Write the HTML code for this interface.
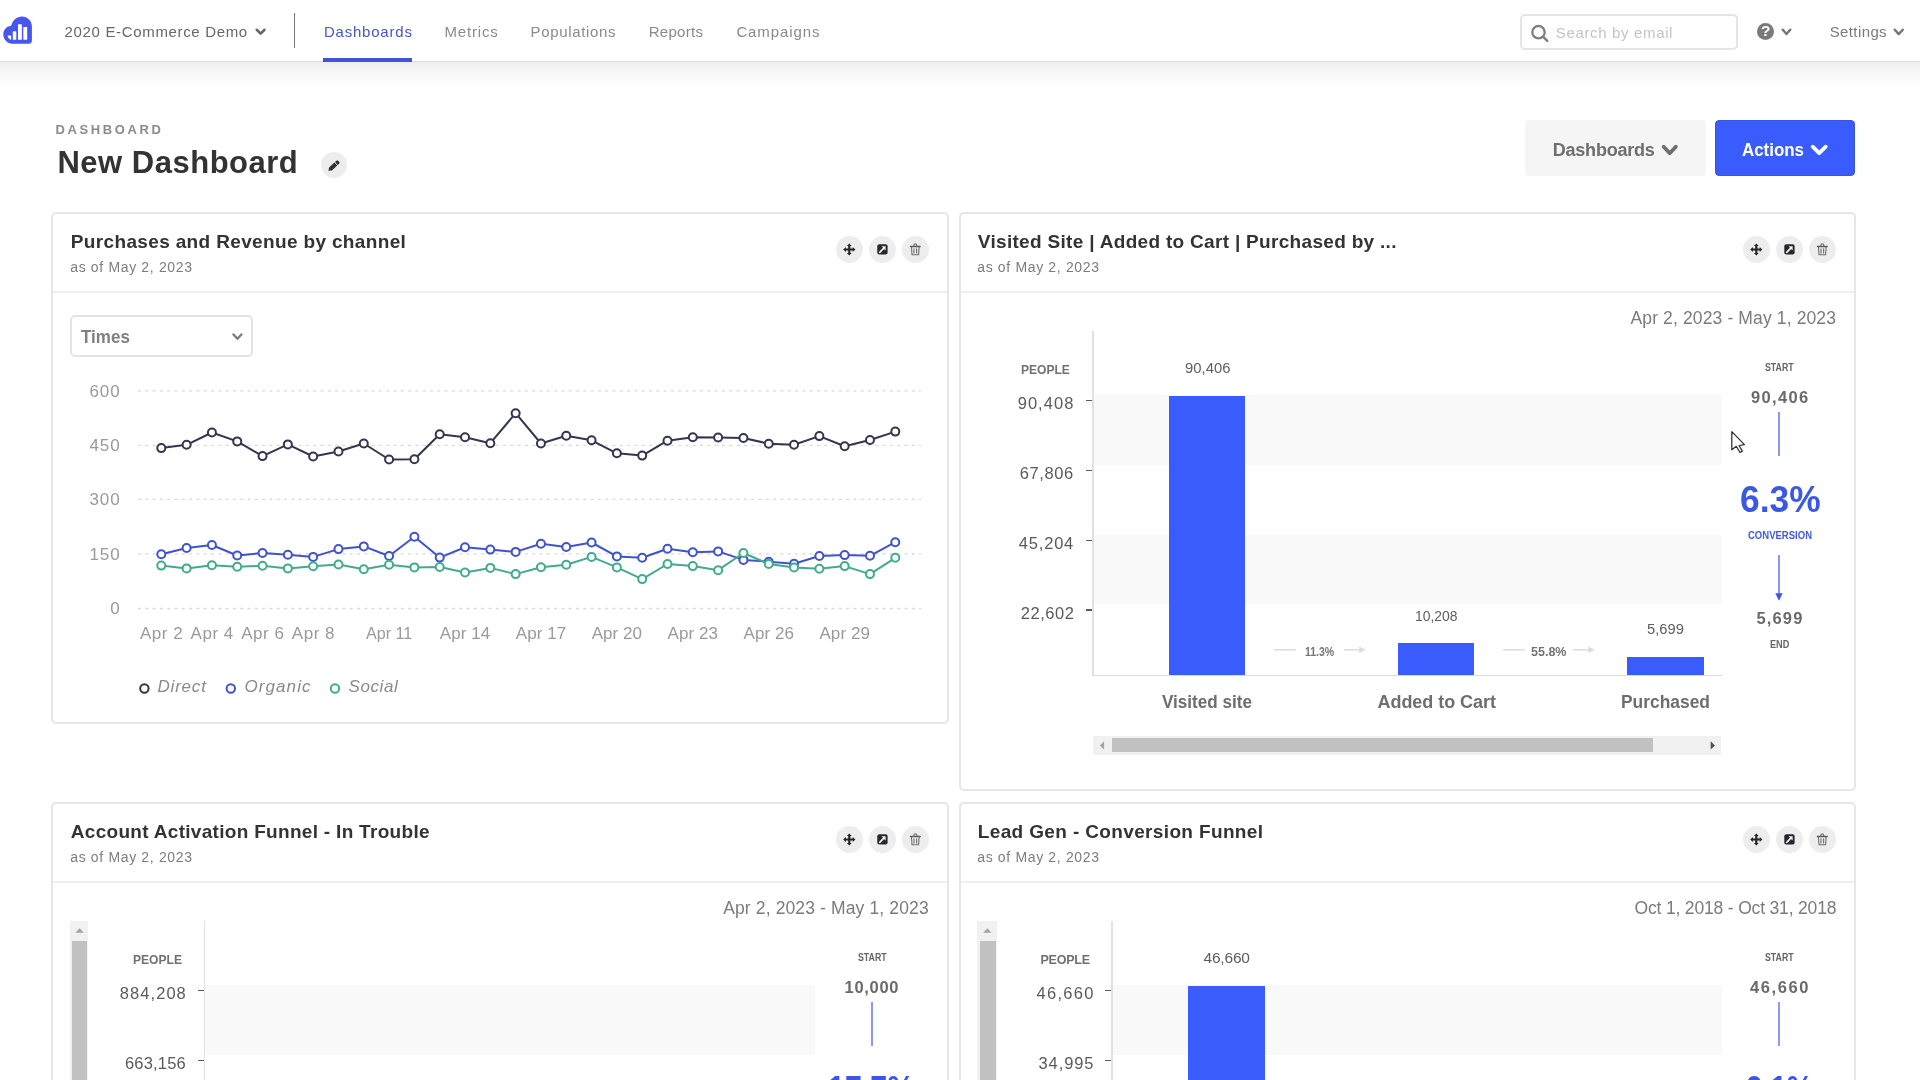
<!DOCTYPE html>
<html lang="en">
<head>
<meta charset="utf-8">
<title>New Dashboard</title>
<style>
*{box-sizing:border-box;margin:0;padding:0}
html,body{width:1920px;height:1080px;overflow:hidden;background:#fff}
body{font-family:"Liberation Sans",sans-serif;color:#666;-webkit-font-smoothing:antialiased}
#app{position:relative;width:1920px;height:1080px;overflow:hidden;background:#fff;will-change:transform}
.t{position:absolute;white-space:nowrap;line-height:1;display:block}
.abs{position:absolute}
nav{position:absolute;left:0;top:0;width:1920px;height:62px;background:#fff;border-bottom:1px solid #dedede;z-index:3}
.navshadow{position:absolute;left:0;top:62px;width:1920px;height:28px;background:linear-gradient(#ededed,#f6f6f6 30%,#fcfcfc 65%,#fff);z-index:1}
.card{position:absolute;background:#fff;border:2px solid #e6e6e6;border-radius:5px;z-index:2}
.card .sep{position:absolute;left:0;right:0;height:2px;background:#efefef}
.ib{position:absolute;width:27px;height:27px;border-radius:50%;background:#ededee}
.ib svg{position:absolute;left:0;top:0}
.btn{position:absolute;border-radius:4px}
</style>
</head>
<body>
<div id="app">
<nav>
<svg class="abs" style="left:0;top:10px" width="40" height="40" viewBox="0 10 40 40">
<path d="M21.9 16.5c5.6 0 10 4.4 10 9.9V40.6a3.1 3.1 0 0 1-3.1 3.1H12.2C7.2 43.7 3.3 39.3 3.3 34.3c0-4.3 3.1-7.9 7.3-8.3 .4-.1 .8-.4 .9-.9 1.1-4.9 5.3-8.6 10.4-8.6z" fill="#4656ee"/>
<path d="M7.6 35.6h3.5v4.1H10.9c-1.5 0-3.3-2.3-3.3-4.1z" fill="#fff"/>
<rect x="12.8" y="31.3" width="3.5" height="8.5" rx=".6" fill="#fff"/>
<rect x="18" y="24.3" width="3.9" height="15.5" rx=".6" fill="#fff"/>
<rect x="23.3" y="27" width="3.9" height="12.8" rx=".6" fill="#fff"/>
</svg>
<span class="t" style="left:64.6px;top:24.1px;font-size:15px;color:#666;letter-spacing:0.66px;">2020 E-Commerce Demo</span>
<svg class="abs" style="left:252.9px;top:26.1px" width="15.3" height="11.4" viewBox="252.9 26.1 15.3 11.4"><path d="M256.65 29.85 L260.55 33.75 L264.45 29.85" fill="none" stroke="#666" stroke-width="2.5" stroke-linecap="round" stroke-linejoin="round"/></svg>
<div class="abs" style="left:294px;top:13px;width:1px;height:35px;background:#777"></div>
<a class="t" style="left:323.9px;top:24.4px;font-size:15px;color:#4657c8;letter-spacing:0.79px;">Dashboards</a>
<div class="abs" style="left:322.5px;top:58px;width:89.5px;height:4px;background:#4153d6"></div>
<a class="t" style="left:444.5px;top:24.4px;font-size:15px;color:#8a8a8a;letter-spacing:0.81px;">Metrics</a>
<a class="t" style="left:530.6px;top:24.4px;font-size:15px;color:#8a8a8a;letter-spacing:0.65px;">Populations</a>
<a class="t" style="left:648.7px;top:24.4px;font-size:15px;color:#8a8a8a;letter-spacing:0.3px;">Reports</a>
<a class="t" style="left:736.4px;top:24.4px;font-size:15px;color:#8a8a8a;letter-spacing:0.89px;">Campaigns</a>
<div class="abs" style="left:1520.2px;top:14px;width:217.800px;height:35.800px;border:2px solid #e5e5e5;border-radius:5px;background:#fff"></div>
<svg class="abs" style="left:1530px;top:23px" width="20" height="20" viewBox="1530 23 20 20"><circle cx="1538.5" cy="32.2" r="6.200" fill="none" stroke="#808080" stroke-width="2.300"/><path d="M1543.2 36.9L1547.3 40.9" stroke="#808080" stroke-width="2.500" stroke-linecap="round"/></svg>
<span class="t" style="left:1555.8px;top:25px;font-size:15px;color:#c4c4c4;letter-spacing:0.65px;">Search by email</span>
<div class="abs" style="left:1756.5px;top:22.5px;width:17px;height:17px;border-radius:50%;background:#7a7a7a"></div>
<span class="t" style="left:1761.1px;top:23.48px;font-size:15.5px;font-weight:700;color:#fff;">?</span>
<svg class="abs" style="left:1778.5px;top:25.9px" width="15" height="11.8" viewBox="1778.5 25.9 15 11.8"><path d="M1782.25 29.65 L1786 33.95 L1789.75 29.65" fill="none" stroke="#777" stroke-width="2.5" stroke-linecap="round" stroke-linejoin="round"/></svg>
<span class="t" style="left:1829.7px;top:24.3px;font-size:15px;color:#7a7a7a;letter-spacing:0.39px;">Settings</span>
<svg class="abs" style="left:1891.3px;top:25.9px" width="15.5" height="11.8" viewBox="1891.3 25.9 15.5 11.8"><path d="M1895.05 29.65 L1899.05 33.95 L1903.05 29.65" fill="none" stroke="#777" stroke-width="2.5" stroke-linecap="round" stroke-linejoin="round"/></svg>
</nav>
<div class="navshadow"></div>
<header class="abs" style="left:0;top:100px;width:1920px;height:100px;z-index:2">
<span class="t" style="left:55.6px;top:23.4px;font-size:13px;font-weight:700;color:#8b8b8b;letter-spacing:2.6px;">DASHBOARD</span>
<h1 class="t" style="left:57.4px;top:46.76px;font-size:31px;font-weight:700;color:#333;letter-spacing:0.51px;">New Dashboard</h1>
<div class="ib" style="left:320.8px;top:51.7px;width:26.6px;height:26.6px"></div><svg class="abs" style="left:320px;top:50px" width="28" height="28" viewBox="320 150 28 28"><path d="M328.4 170.8L331.8 170.4L337.2 165.5L334.4 162.5L329.1 167.4z M337.7 165.0L339.4 163.5L339.5 162.3L337.8 160.5L336.7 160.4L335.0 162.0z" fill="#2e2e2e"/></svg>
<div class="btn" style="left:1525.4px;top:20px;width:180.6px;height:56.4px;background:#f5f5f5"></div>
<span class="t" style="left:1552.75px;top:41.16px;font-size:18px;font-weight:700;color:#6e6e6e;letter-spacing:-0.22px;">Dashboards</span>
<svg class="abs" style="left:1658.45px;top:41.2px" width="23.55" height="17.9" viewBox="1658.45 41.2 23.55 17.9"><path d="M1664.15 46.9 L1670.22 53.4 L1676.3 46.9" fill="none" stroke="#6e6e6e" stroke-width="3.8" stroke-linecap="round" stroke-linejoin="round"/></svg>
<div class="btn" style="left:1715.3px;top:19.7px;width:139.4px;height:56.8px;background:#3a5cfc;border:1px solid #3853d8"></div>
<span class="t" style="left:1742px;top:41.16px;font-size:18px;transform:scaleX(0.9393);transform-origin:0 0;font-weight:700;color:#fff;">Actions</span>
<svg class="abs" style="left:1806.6px;top:41.2px" width="24.45" height="17.9" viewBox="1806.6 41.2 24.45 17.9"><path d="M1812.3 46.9 L1818.83 53.4 L1825.35 46.9" fill="none" stroke="#fff" stroke-width="3.8" stroke-linecap="round" stroke-linejoin="round"/></svg>
</header>
<section class="card" style="left:51px;top:212px;width:897.700px;height:512px">
<h2 class="t" style="left:17.8px;top:17.52px;font-size:19px;font-weight:700;color:#333;letter-spacing:0.35px;">Purchases and Revenue by channel</h2>
<span class="t" style="left:17.2px;top:45.65px;font-size:14px;color:#7d7d7d;letter-spacing:0.66px;">as of May 2, 2023</span>
<div class="ib" style="left:782.6px;top:21.6px"><svg width="27" height="27" viewBox="0 0 27 27"><path d="M13.300 7.400l2.400 2.700h-1.300v2.300h2.300v-1.300l2.700 2.400-2.700 2.400v-1.300h-2.300v2.300h1.300l-2.400 2.700-2.400-2.700h1.300v-2.300H9.900v1.300l-2.700-2.400 2.700-2.400v1.300h2.300v-2.300h-1.300z" fill="#262626"/></svg></div><div class="ib" style="left:816.1px;top:21.6px"><svg width="27" height="27" viewBox="0 0 27 27"><rect x="8.300" y="8.300" width="10.300" height="10.300" rx="2" fill="#26262e"/><path d="M10.700 16.300l3.900-3.900" stroke="#f4f4f4" stroke-width="1.700" stroke-linecap="round"/><path d="M12.500 10.300h4.100v4.100z" fill="#f4f4f4"/></svg></div><div class="ib" style="left:849.1px;top:21.6px"><svg width="27" height="27" viewBox="0 0 27 27"><path d="M8.400 10.500h9.800" stroke="#555" stroke-width="1.300" stroke-linecap="round" fill="none"/><path d="M11.600 10.300l.7-2.300h2l.7 2.300M9.500 11l.5 7.700h6.600l.5-7.700M12 12.800v4.200M14.600 12.800v4.200" fill="none" stroke="#6e6e6e" stroke-width="1.100" stroke-linecap="round" stroke-linejoin="round"/></svg></div>
<div class="sep" style="top:77px"></div>
<div class="abs" style="left:16.6px;top:101px;width:183.400px;height:42px;border:2px solid #e4e4e4;border-radius:5px"></div>
<span class="t" style="left:28.4px;top:114.79px;font-size:17.5px;transform:scaleX(0.9729);transform-origin:0 0;font-weight:700;color:#808080;">Times</span>
<svg class="abs" style="left:177.4px;top:116.7px" width="14.9" height="11.3" viewBox="177.4 116.7 14.9 11.3"><path d="M180.85 120.15 L184.85 124.55 L188.85 120.15" fill="none" stroke="#7c7c7c" stroke-width="2.3" stroke-linecap="round" stroke-linejoin="round"/></svg>
<svg class="abs" style="left:0;top:156px" width="895" height="350" viewBox="53 370 895 350"><line x1="138" x2="921" y1="390.8" y2="390.8" stroke="#d9d9d9" stroke-width="1.300" stroke-dasharray="3 4.300"/><line x1="138" x2="921" y1="445.3" y2="445.3" stroke="#d9d9d9" stroke-width="1.300" stroke-dasharray="3 4.300"/><line x1="138" x2="921" y1="499.4" y2="499.4" stroke="#d9d9d9" stroke-width="1.300" stroke-dasharray="3 4.300"/><line x1="138" x2="921" y1="553.9" y2="553.9" stroke="#d9d9d9" stroke-width="1.300" stroke-dasharray="3 4.300"/><line x1="138" x2="921" y1="608.5" y2="608.5" stroke="#d9d9d9" stroke-width="1.300" stroke-dasharray="3 4.300"/><g stroke="#34354f" stroke-width="2" fill="#fff"><polyline points="161.3,448.1 186.61,444.8 211.92,432.5 237.23,441.4 262.54,456.1 287.85,444.4 313.16,456.5 338.47,451.5 363.78,443.5 389.09,459.5 414.4,459.3 439.71,434.3 465.02,437.3 490.33,443.2 515.64,413.2 540.95,443.5 566.26,435.7 591.57,440.3 616.88,453.3 642.19,455.6 667.5,440.7 692.81,437.3 718.12,437.5 743.43,438 768.74,443.7 794.05,444.8 819.36,436.1 844.67,446.2 869.98,440 895.29,431.6" fill="none" stroke-linejoin="round"/><circle cx="161.3" cy="448.1" r="4"/><circle cx="186.61" cy="444.8" r="4"/><circle cx="211.92" cy="432.5" r="4"/><circle cx="237.23" cy="441.4" r="4"/><circle cx="262.54" cy="456.1" r="4"/><circle cx="287.85" cy="444.4" r="4"/><circle cx="313.16" cy="456.5" r="4"/><circle cx="338.47" cy="451.5" r="4"/><circle cx="363.78" cy="443.5" r="4"/><circle cx="389.09" cy="459.5" r="4"/><circle cx="414.4" cy="459.3" r="4"/><circle cx="439.71" cy="434.3" r="4"/><circle cx="465.02" cy="437.3" r="4"/><circle cx="490.33" cy="443.2" r="4"/><circle cx="515.64" cy="413.2" r="4"/><circle cx="540.95" cy="443.5" r="4"/><circle cx="566.26" cy="435.7" r="4"/><circle cx="591.57" cy="440.3" r="4"/><circle cx="616.88" cy="453.3" r="4"/><circle cx="642.19" cy="455.6" r="4"/><circle cx="667.5" cy="440.7" r="4"/><circle cx="692.81" cy="437.3" r="4"/><circle cx="718.12" cy="437.5" r="4"/><circle cx="743.43" cy="438" r="4"/><circle cx="768.74" cy="443.7" r="4"/><circle cx="794.05" cy="444.8" r="4"/><circle cx="819.36" cy="436.1" r="4"/><circle cx="844.67" cy="446.2" r="4"/><circle cx="869.98" cy="440" r="4"/><circle cx="895.29" cy="431.6" r="4"/></g><g stroke="#4052cc" stroke-width="2" fill="#fff"><polyline points="161.3,554.2 186.61,548 211.92,545 237.23,555.5 262.54,553 287.85,554.8 313.16,556.9 338.47,549.1 363.78,546.4 389.09,556 414.4,536.7 439.71,557.6 465.02,547.3 490.33,549.6 515.64,551.9 540.95,543.8 566.26,547 591.57,542.5 616.88,556.4 642.19,557.8 667.5,548.7 692.81,552.3 718.12,551.4 743.43,559.9 768.74,561.7 794.05,563.8 819.36,556 844.67,555.1 869.98,555.8 895.29,542.2" fill="none" stroke-linejoin="round"/><circle cx="161.3" cy="554.2" r="4"/><circle cx="186.61" cy="548" r="4"/><circle cx="211.92" cy="545" r="4"/><circle cx="237.23" cy="555.5" r="4"/><circle cx="262.54" cy="553" r="4"/><circle cx="287.85" cy="554.8" r="4"/><circle cx="313.16" cy="556.9" r="4"/><circle cx="338.47" cy="549.1" r="4"/><circle cx="363.78" cy="546.4" r="4"/><circle cx="389.09" cy="556" r="4"/><circle cx="414.4" cy="536.7" r="4"/><circle cx="439.71" cy="557.6" r="4"/><circle cx="465.02" cy="547.3" r="4"/><circle cx="490.33" cy="549.6" r="4"/><circle cx="515.64" cy="551.9" r="4"/><circle cx="540.95" cy="543.8" r="4"/><circle cx="566.26" cy="547" r="4"/><circle cx="591.57" cy="542.5" r="4"/><circle cx="616.88" cy="556.4" r="4"/><circle cx="642.19" cy="557.8" r="4"/><circle cx="667.5" cy="548.7" r="4"/><circle cx="692.81" cy="552.3" r="4"/><circle cx="718.12" cy="551.4" r="4"/><circle cx="743.43" cy="559.9" r="4"/><circle cx="768.74" cy="561.7" r="4"/><circle cx="794.05" cy="563.8" r="4"/><circle cx="819.36" cy="556" r="4"/><circle cx="844.67" cy="555.1" r="4"/><circle cx="869.98" cy="555.8" r="4"/><circle cx="895.29" cy="542.2" r="4"/></g><g stroke="#41ab8d" stroke-width="2" fill="#fff"><polyline points="161.3,565.6 186.61,568.4 211.92,565.2 237.23,566.8 262.54,565.8 287.85,568.4 313.16,566.3 338.47,564.5 363.78,569.3 389.09,564.7 414.4,567.4 439.71,567 465.02,572.5 490.33,567.9 515.64,574.1 540.95,567.2 566.26,564.7 591.57,556.9 616.88,567.4 642.19,579.1 667.5,564 692.81,566.1 718.12,570.2 743.43,553 768.74,564 794.05,567.4 819.36,568.8 844.67,566.1 869.98,574.1 895.29,557.8" fill="none" stroke-linejoin="round"/><circle cx="161.3" cy="565.6" r="4"/><circle cx="186.61" cy="568.4" r="4"/><circle cx="211.92" cy="565.2" r="4"/><circle cx="237.23" cy="566.8" r="4"/><circle cx="262.54" cy="565.8" r="4"/><circle cx="287.85" cy="568.4" r="4"/><circle cx="313.16" cy="566.3" r="4"/><circle cx="338.47" cy="564.5" r="4"/><circle cx="363.78" cy="569.3" r="4"/><circle cx="389.09" cy="564.7" r="4"/><circle cx="414.4" cy="567.4" r="4"/><circle cx="439.71" cy="567" r="4"/><circle cx="465.02" cy="572.5" r="4"/><circle cx="490.33" cy="567.9" r="4"/><circle cx="515.64" cy="574.1" r="4"/><circle cx="540.95" cy="567.2" r="4"/><circle cx="566.26" cy="564.7" r="4"/><circle cx="591.57" cy="556.9" r="4"/><circle cx="616.88" cy="567.4" r="4"/><circle cx="642.19" cy="579.1" r="4"/><circle cx="667.5" cy="564" r="4"/><circle cx="692.81" cy="566.1" r="4"/><circle cx="718.12" cy="570.2" r="4"/><circle cx="743.43" cy="553" r="4"/><circle cx="768.74" cy="564" r="4"/><circle cx="794.05" cy="567.4" r="4"/><circle cx="819.36" cy="568.8" r="4"/><circle cx="844.67" cy="566.1" r="4"/><circle cx="869.98" cy="574.1" r="4"/><circle cx="895.29" cy="557.8" r="4"/></g><circle cx="144.4" cy="688.5" r="4.200" fill="#fff" stroke="#34354f" stroke-width="2"/><circle cx="230.8" cy="688.5" r="4.200" fill="#fff" stroke="#4052cc" stroke-width="2"/><circle cx="335" cy="688.5" r="4.200" fill="#fff" stroke="#41ab8d" stroke-width="2"/></svg>
<span class="t" style="left:36.44px;top:168.81px;font-size:17px;color:#9a9a9a;letter-spacing:0.9px;">600</span>
<span class="t" style="left:36.44px;top:223.21px;font-size:17px;color:#9a9a9a;letter-spacing:0.9px;">450</span>
<span class="t" style="left:36.44px;top:277.41px;font-size:17px;color:#9a9a9a;letter-spacing:0.9px;">300</span>
<span class="t" style="left:36.44px;top:331.81px;font-size:17px;color:#9a9a9a;letter-spacing:0.9px;">150</span>
<span class="t" style="left:57.15px;top:386.41px;font-size:17px;color:#9a9a9a;">0</span>
<span class="t" style="left:86.95px;top:410.81px;font-size:17px;color:#9a9a9a;letter-spacing:0.52px;">Apr 2</span>
<span class="t" style="left:137.57px;top:410.81px;font-size:17px;color:#9a9a9a;letter-spacing:0.52px;">Apr 4</span>
<span class="t" style="left:188.19px;top:410.81px;font-size:17px;color:#9a9a9a;letter-spacing:0.52px;">Apr 6</span>
<span class="t" style="left:238.81px;top:410.81px;font-size:17px;color:#9a9a9a;letter-spacing:0.52px;">Apr 8</span>
<span class="t" style="left:312.94px;top:410.81px;font-size:17px;transform:scaleX(0.9483);transform-origin:0 0;color:#9a9a9a;">Apr 11</span>
<span class="t" style="left:386.82px;top:410.81px;font-size:17px;color:#9a9a9a;letter-spacing:0.06px;">Apr 14</span>
<span class="t" style="left:462.75px;top:410.81px;font-size:17px;color:#9a9a9a;letter-spacing:0.06px;">Apr 17</span>
<span class="t" style="left:538.68px;top:410.81px;font-size:17px;color:#9a9a9a;letter-spacing:0.06px;">Apr 20</span>
<span class="t" style="left:614.61px;top:410.81px;font-size:17px;color:#9a9a9a;letter-spacing:0.06px;">Apr 23</span>
<span class="t" style="left:690.54px;top:410.81px;font-size:17px;color:#9a9a9a;letter-spacing:0.06px;">Apr 26</span>
<span class="t" style="left:766.47px;top:410.81px;font-size:17px;color:#9a9a9a;letter-spacing:0.06px;">Apr 29</span>
<span class="t" style="left:104.5px;top:463.51px;font-size:17px;font-style:italic;color:#8a8a8a;letter-spacing:0.8px;">Direct</span>
<span class="t" style="left:191.4px;top:463.51px;font-size:17px;font-style:italic;color:#8a8a8a;letter-spacing:1.11px;">Organic</span>
<span class="t" style="left:295.5px;top:463.51px;font-size:17px;font-style:italic;color:#8a8a8a;letter-spacing:0.58px;">Social</span>
</section>
<section class="card" style="left:958.9px;top:212px;width:896.7px;height:578.6px">
<h2 class="t" style="left:16.9px;top:17.52px;font-size:19px;font-weight:700;color:#333;letter-spacing:0.31px;">Visited Site | Added to Cart | Purchased by ...</h2>
<span class="t" style="left:16.3px;top:45.65px;font-size:14px;color:#7d7d7d;letter-spacing:0.66px;">as of May 2, 2023</span>
<div class="ib" style="left:782px;top:21.6px"><svg width="27" height="27" viewBox="0 0 27 27"><path d="M13.300 7.400l2.400 2.700h-1.300v2.300h2.300v-1.300l2.700 2.400-2.700 2.400v-1.300h-2.300v2.300h1.300l-2.400 2.700-2.400-2.700h1.300v-2.300H9.900v1.300l-2.700-2.400 2.700-2.400v1.300h2.300v-2.300h-1.300z" fill="#262626"/></svg></div><div class="ib" style="left:815.3px;top:21.6px"><svg width="27" height="27" viewBox="0 0 27 27"><rect x="8.300" y="8.300" width="10.300" height="10.300" rx="2" fill="#26262e"/><path d="M10.700 16.300l3.900-3.900" stroke="#f4f4f4" stroke-width="1.700" stroke-linecap="round"/><path d="M12.500 10.300h4.100v4.100z" fill="#f4f4f4"/></svg></div><div class="ib" style="left:848.3px;top:21.6px"><svg width="27" height="27" viewBox="0 0 27 27"><path d="M8.400 10.500h9.800" stroke="#555" stroke-width="1.300" stroke-linecap="round" fill="none"/><path d="M11.600 10.300l.7-2.300h2l.7 2.300M9.500 11l.5 7.700h6.600l.5-7.700M12 12.800v4.200M14.600 12.800v4.200" fill="none" stroke="#6e6e6e" stroke-width="1.100" stroke-linecap="round" stroke-linejoin="round"/></svg></div>
<div class="sep" style="top:77px"></div>
<span class="t" style="left:669.6px;top:95.79px;font-size:17.5px;color:#7b7b7b;letter-spacing:0.13px;">Apr 2, 2023 - May 1, 2023</span>
<div class="abs" style="left:132.3px;top:181.3px;width:628.8px;height:69.400px;background:#f9f9f9"></div>
<div class="abs" style="left:132.3px;top:320.9px;width:628.8px;height:69.400px;background:#f9f9f9"></div>
<div class="abs" style="left:131.1px;top:117px;width:1.800px;height:345px;background:#e1e1e1"></div>
<div class="abs" style="left:131.1px;top:460.7px;width:629.9px;height:1.600px;background:#dcdcdc"></div>
<span class="t" style="left:60.6px;top:150.12px;font-size:12.5px;transform:scaleX(0.9643);transform-origin:0 0;font-weight:700;color:#707070;">PEOPLE</span>
<span class="t" style="left:56.8px;top:181.33px;font-size:16.5px;color:#5a5a5a;letter-spacing:1.03px;">90,408</span>
<div class="abs" style="left:125.3px;top:186.1px;width:5.800px;height:1.400px;background:#5a5a5a"></div>
<span class="t" style="left:58.9px;top:251.13px;font-size:16.5px;color:#5a5a5a;letter-spacing:0.61px;">67,806</span>
<div class="abs" style="left:125.3px;top:255.9px;width:5.800px;height:1.400px;background:#5a5a5a"></div>
<span class="t" style="left:57.9px;top:320.93px;font-size:16.5px;color:#5a5a5a;letter-spacing:0.81px;">45,204</span>
<div class="abs" style="left:125.3px;top:325.6px;width:5.800px;height:1.400px;background:#5a5a5a"></div>
<span class="t" style="left:59.9px;top:390.83px;font-size:16.5px;color:#5a5a5a;letter-spacing:0.55px;">22,602</span>
<div class="abs" style="left:125.3px;top:395.4px;width:5.800px;height:1.400px;background:#5a5a5a"></div>
<div class="abs" style="left:208.3px;top:181.8px;width:76.2px;height:279px;background:#3a5cfc"></div>
<span class="t" style="left:223.7px;top:146.08px;font-size:15.5px;transform:scaleX(0.9575);transform-origin:0 0;color:#5e5e5e;">90,406</span>
<div class="abs" style="left:437.6px;top:429px;width:76px;height:31.8px;background:#3a5cfc"></div>
<span class="t" style="left:454.1px;top:393.68px;font-size:15.5px;transform:scaleX(0.8964);transform-origin:0 0;color:#5e5e5e;">10,208</span>
<div class="abs" style="left:666.3px;top:442.7px;width:76.5px;height:18.1px;background:#3a5cfc"></div>
<span class="t" style="left:686px;top:407.38px;font-size:15.5px;transform:scaleX(0.9489);transform-origin:0 0;color:#5e5e5e;">5,699</span>
<span class="t" style="left:343.9px;top:430.6px;font-size:13px;transform:scaleX(0.8080);transform-origin:0 0;font-weight:700;color:#747474;">11.3%</span>
<svg class="abs" style="left:313.1px;top:431px" width="93.6" height="10" viewBox="1274 645 93.6 10"><path d="M1274 649.800H1295.8 M1343.8 649.800H1360.6" stroke="#dcdcdc" stroke-width="1.400" fill="none"/><path d="M1359.1 646.500l6.500 3.300-6.500 3.300z" fill="#dcdcdc"/></svg>
<span class="t" style="left:570.1px;top:430.6px;font-size:13px;transform:scaleX(0.9632);transform-origin:0 0;font-weight:700;color:#747474;">55.8%</span>
<svg class="abs" style="left:542.1px;top:431px" width="93.8" height="10" viewBox="1503 645 93.8 10"><path d="M1503 649.800H1524.8 M1573 649.800H1589.8" stroke="#dcdcdc" stroke-width="1.400" fill="none"/><path d="M1588.3 646.500l6.500 3.300-6.500 3.300z" fill="#dcdcdc"/></svg>
<span class="t" style="left:201.1px;top:479.06px;font-size:18px;transform:scaleX(0.9502);transform-origin:0 0;font-weight:700;color:#6e6e6e;">Visited site</span>
<span class="t" style="left:416.6px;top:479.06px;font-size:18px;font-weight:700;color:#6e6e6e;letter-spacing:-0.04px;">Added to Cart</span>
<span class="t" style="left:660.1px;top:479.06px;font-size:18px;transform:scaleX(0.9670);transform-origin:0 0;font-weight:700;color:#6e6e6e;">Purchased</span>
<span class="t" style="left:803.75px;top:148.41px;font-size:10.5px;transform:scaleX(0.8387);transform-origin:0 0;font-weight:700;color:#666;">START</span>
<span class="t" style="left:790.1px;top:175.43px;font-size:16.5px;font-weight:700;color:#6a6a6a;letter-spacing:1.37px;">90,406</span>
<div class="abs" style="left:817.3px;top:198px;width:1.600px;height:44px;background:#8e9ae6"></div>
<span class="t" style="left:778.9px;top:268.13px;font-size:36px;transform:scaleX(0.9824);transform-origin:0 0;font-weight:700;color:#3a57e8;">6.3%</span>
<span class="t" style="left:786.7px;top:315.81px;font-size:10.5px;transform:scaleX(0.9066);transform-origin:0 0;font-weight:700;color:#3f5be0;">CONVERSION</span>
<svg class="abs" style="left:812.1px;top:339px" width="12" height="50" viewBox="1773 553 12 50"><path d="M1779 555V595" stroke="#6475e4" stroke-width="1.500"/><path d="M1775.3 593.300h7.400l-3.700 7.400z" fill="#3f55e0"/></svg>
<span class="t" style="left:795.6px;top:396.13px;font-size:16.5px;font-weight:700;color:#6a6a6a;letter-spacing:1.15px;">5,699</span>
<span class="t" style="left:809.05px;top:424.51px;font-size:10.5px;transform:scaleX(0.8707);transform-origin:0 0;font-weight:700;color:#666;">END</span>
<div class="abs" style="left:131.8px;top:521.8px;width:628.8px;height:19.200px;background:#f1f1f1"></div>
<div class="abs" style="left:151px;top:524.3px;width:541.1px;height:14.200px;background:#c1c1c1"></div>
<svg class="abs" style="left:131.8px;top:521px" width="628.8" height="20" viewBox="1092.7 735 628.8 20"><path d="M1099.6 745.400l4.200-4.200v8.400z" fill="#a3a3a3"/><path d="M1714.6 745.400l-4.200-4.200v8.400z" fill="#505050"/></svg>
</section>
<section class="card" style="left:51px;top:801.5px;width:897.7px;height:300px">
<h2 class="t" style="left:17.8px;top:18.02px;font-size:19px;font-weight:700;color:#333;letter-spacing:0.3px;">Account Activation Funnel - In Trouble</h2>
<span class="t" style="left:17.2px;top:46.15px;font-size:14px;color:#7d7d7d;letter-spacing:0.66px;">as of May 2, 2023</span>
<div class="ib" style="left:782.6px;top:22.1px"><svg width="27" height="27" viewBox="0 0 27 27"><path d="M13.300 7.400l2.400 2.700h-1.300v2.300h2.300v-1.300l2.700 2.400-2.700 2.400v-1.300h-2.300v2.300h1.300l-2.400 2.700-2.400-2.700h1.300v-2.300H9.900v1.300l-2.700-2.400 2.700-2.400v1.300h2.300v-2.300h-1.300z" fill="#262626"/></svg></div><div class="ib" style="left:816.1px;top:22.1px"><svg width="27" height="27" viewBox="0 0 27 27"><rect x="8.300" y="8.300" width="10.300" height="10.300" rx="2" fill="#26262e"/><path d="M10.700 16.300l3.900-3.900" stroke="#f4f4f4" stroke-width="1.700" stroke-linecap="round"/><path d="M12.500 10.300h4.100v4.100z" fill="#f4f4f4"/></svg></div><div class="ib" style="left:849.1px;top:22.1px"><svg width="27" height="27" viewBox="0 0 27 27"><path d="M8.400 10.500h9.800" stroke="#555" stroke-width="1.300" stroke-linecap="round" fill="none"/><path d="M11.600 10.300l.7-2.300h2l.7 2.300M9.500 11l.5 7.700h6.600l.5-7.700M12 12.800v4.200M14.600 12.800v4.200" fill="none" stroke="#6e6e6e" stroke-width="1.100" stroke-linecap="round" stroke-linejoin="round"/></svg></div>
<div class="sep" style="top:77.5px"></div>
<span class="t" style="left:670.2px;top:96.29px;font-size:17.5px;color:#7b7b7b;letter-spacing:0.13px;">Apr 2, 2023 - May 1, 2023</span>
<div class="abs" style="left:151.9px;top:181.8px;width:610.1px;height:69.400px;background:#f9f9f9"></div>
<div class="abs" style="left:151.9px;top:321.4px;width:610.1px;height:69.400px;background:#f9f9f9"></div>
<div class="abs" style="left:150.7px;top:117.5px;width:1.800px;height:345px;background:#e1e1e1"></div>
<div class="abs" style="left:150.7px;top:461.2px;width:611.2px;height:1.600px;background:#dcdcdc"></div>
<span class="t" style="left:80.3px;top:150.62px;font-size:12.5px;transform:scaleX(0.9662);transform-origin:0 0;font-weight:700;color:#707070;">PEOPLE</span>
<span class="t" style="left:66.8px;top:181.83px;font-size:16.5px;color:#5a5a5a;letter-spacing:1.06px;">884,208</span>
<div class="abs" style="left:144.9px;top:186.6px;width:5.800px;height:1.400px;background:#5a5a5a"></div>
<span class="t" style="left:72px;top:251.63px;font-size:16.5px;color:#5a5a5a;letter-spacing:0.19px;">663,156</span>
<div class="abs" style="left:144.9px;top:256.4px;width:5.800px;height:1.400px;background:#5a5a5a"></div>
<span class="t" style="left:804.65px;top:148.91px;font-size:10.5px;transform:scaleX(0.8387);transform-origin:0 0;font-weight:700;color:#666;">START</span>
<span class="t" style="left:791.6px;top:175.93px;font-size:16.5px;font-weight:700;color:#6a6a6a;letter-spacing:0.67px;">10,000</span>
<div class="abs" style="left:818.2px;top:198.5px;width:1.600px;height:44px;background:#8e9ae6"></div>
<span class="t" style="left:774.5px;top:268.63px;font-size:36px;transform:scaleX(0.8446);transform-origin:0 0;font-weight:700;color:#3a57e8;">17.7%</span>
<div class="abs" style="left:16.8px;top:117.75px;width:18.7px;height:200px;background:#f1f1f1"></div>
<div class="abs" style="left:19.3px;top:137.1px;width:14.5px;height:200px;background:#c1c1c1"></div>
<svg class="abs" style="left:16.8px;top:121.5px" width="20" height="12" viewBox="0 0 20 12"><path d="M5.45 7.800l4.200-4.500 4.200 4.500z" fill="#a3a3a3"/></svg>
</section>
<section class="card" style="left:958.9px;top:801.5px;width:896.7px;height:300px">
<h2 class="t" style="left:16.9px;top:18.02px;font-size:19px;font-weight:700;color:#333;letter-spacing:0.36px;">Lead Gen - Conversion Funnel</h2>
<span class="t" style="left:16.3px;top:46.15px;font-size:14px;color:#7d7d7d;letter-spacing:0.66px;">as of May 2, 2023</span>
<div class="ib" style="left:782px;top:22.1px"><svg width="27" height="27" viewBox="0 0 27 27"><path d="M13.300 7.400l2.400 2.700h-1.300v2.300h2.300v-1.300l2.700 2.400-2.700 2.400v-1.300h-2.300v2.300h1.300l-2.400 2.700-2.400-2.700h1.300v-2.300H9.900v1.300l-2.700-2.400 2.700-2.400v1.300h2.300v-2.300h-1.300z" fill="#262626"/></svg></div><div class="ib" style="left:815.3px;top:22.1px"><svg width="27" height="27" viewBox="0 0 27 27"><rect x="8.300" y="8.300" width="10.300" height="10.300" rx="2" fill="#26262e"/><path d="M10.700 16.300l3.900-3.900" stroke="#f4f4f4" stroke-width="1.700" stroke-linecap="round"/><path d="M12.500 10.300h4.100v4.100z" fill="#f4f4f4"/></svg></div><div class="ib" style="left:848.3px;top:22.1px"><svg width="27" height="27" viewBox="0 0 27 27"><path d="M8.400 10.500h9.800" stroke="#555" stroke-width="1.300" stroke-linecap="round" fill="none"/><path d="M11.600 10.300l.7-2.300h2l.7 2.300M9.500 11l.5 7.700h6.600l.5-7.700M12 12.800v4.200M14.600 12.800v4.200" fill="none" stroke="#6e6e6e" stroke-width="1.100" stroke-linecap="round" stroke-linejoin="round"/></svg></div>
<div class="sep" style="top:77.5px"></div>
<span class="t" style="left:673.6px;top:96.29px;font-size:17.5px;color:#7b7b7b;letter-spacing:-0.17px;">Oct 1, 2018 - Oct 31, 2018</span>
<div class="abs" style="left:151.6px;top:181.8px;width:610px;height:69.400px;background:#f9f9f9"></div>
<div class="abs" style="left:151.6px;top:321.4px;width:610px;height:69.400px;background:#f9f9f9"></div>
<div class="abs" style="left:150.4px;top:117.5px;width:1.800px;height:345px;background:#e1e1e1"></div>
<div class="abs" style="left:150.4px;top:461.2px;width:611.1px;height:1.600px;background:#dcdcdc"></div>
<span class="t" style="left:79.6px;top:150.62px;font-size:12.5px;font-weight:700;color:#707070;letter-spacing:-0.24px;">PEOPLE</span>
<span class="t" style="left:75.6px;top:181.83px;font-size:16.5px;color:#5a5a5a;letter-spacing:1.31px;">46,660</span>
<div class="abs" style="left:144.6px;top:186.6px;width:5.800px;height:1.400px;background:#5a5a5a"></div>
<span class="t" style="left:77.6px;top:251.63px;font-size:16.5px;color:#5a5a5a;letter-spacing:0.91px;">34,995</span>
<div class="abs" style="left:144.6px;top:256.4px;width:5.800px;height:1.400px;background:#5a5a5a"></div>
<div class="abs" style="left:227.6px;top:182.3px;width:76.5px;height:279px;background:#3a5cfc"></div>
<span class="t" style="left:242.6px;top:146.58px;font-size:15.5px;color:#5e5e5e;letter-spacing:-0.18px;">46,660</span>
<span class="t" style="left:803.75px;top:148.91px;font-size:10.5px;transform:scaleX(0.8387);transform-origin:0 0;font-weight:700;color:#666;">START</span>
<span class="t" style="left:789.1px;top:175.93px;font-size:16.5px;font-weight:700;color:#6a6a6a;letter-spacing:1.61px;">46,660</span>
<div class="abs" style="left:817.3px;top:198.5px;width:1.600px;height:44px;background:#8e9ae6"></div>
<span class="t" style="left:785.1px;top:268.63px;font-size:36px;transform:scaleX(0.8166);transform-origin:0 0;font-weight:700;color:#3a57e8;">2.1%</span>
<div class="abs" style="left:16.6px;top:117.75px;width:20px;height:200px;background:#f1f1f1"></div>
<div class="abs" style="left:19.1px;top:137.1px;width:15.8px;height:200px;background:#c1c1c1"></div>
<svg class="abs" style="left:16.6px;top:121.5px" width="20" height="12" viewBox="0 0 20 12"><path d="M6.1 7.800l4.200-4.500 4.200 4.500z" fill="#a3a3a3"/></svg>
</section>
<svg class="abs" style="left:1728px;top:428px;z-index:9" width="22" height="30" viewBox="1728 428 22 30"><path d="M1731.800 431.600V449.800L1736.300 446.300 1740 452.500 1742.300 451.100 1739.100 445.500 1744.400 444.600z" fill="#fff" stroke="#303030" stroke-width="1.250" stroke-linejoin="round"/></svg>
</div>
</body>
</html>
